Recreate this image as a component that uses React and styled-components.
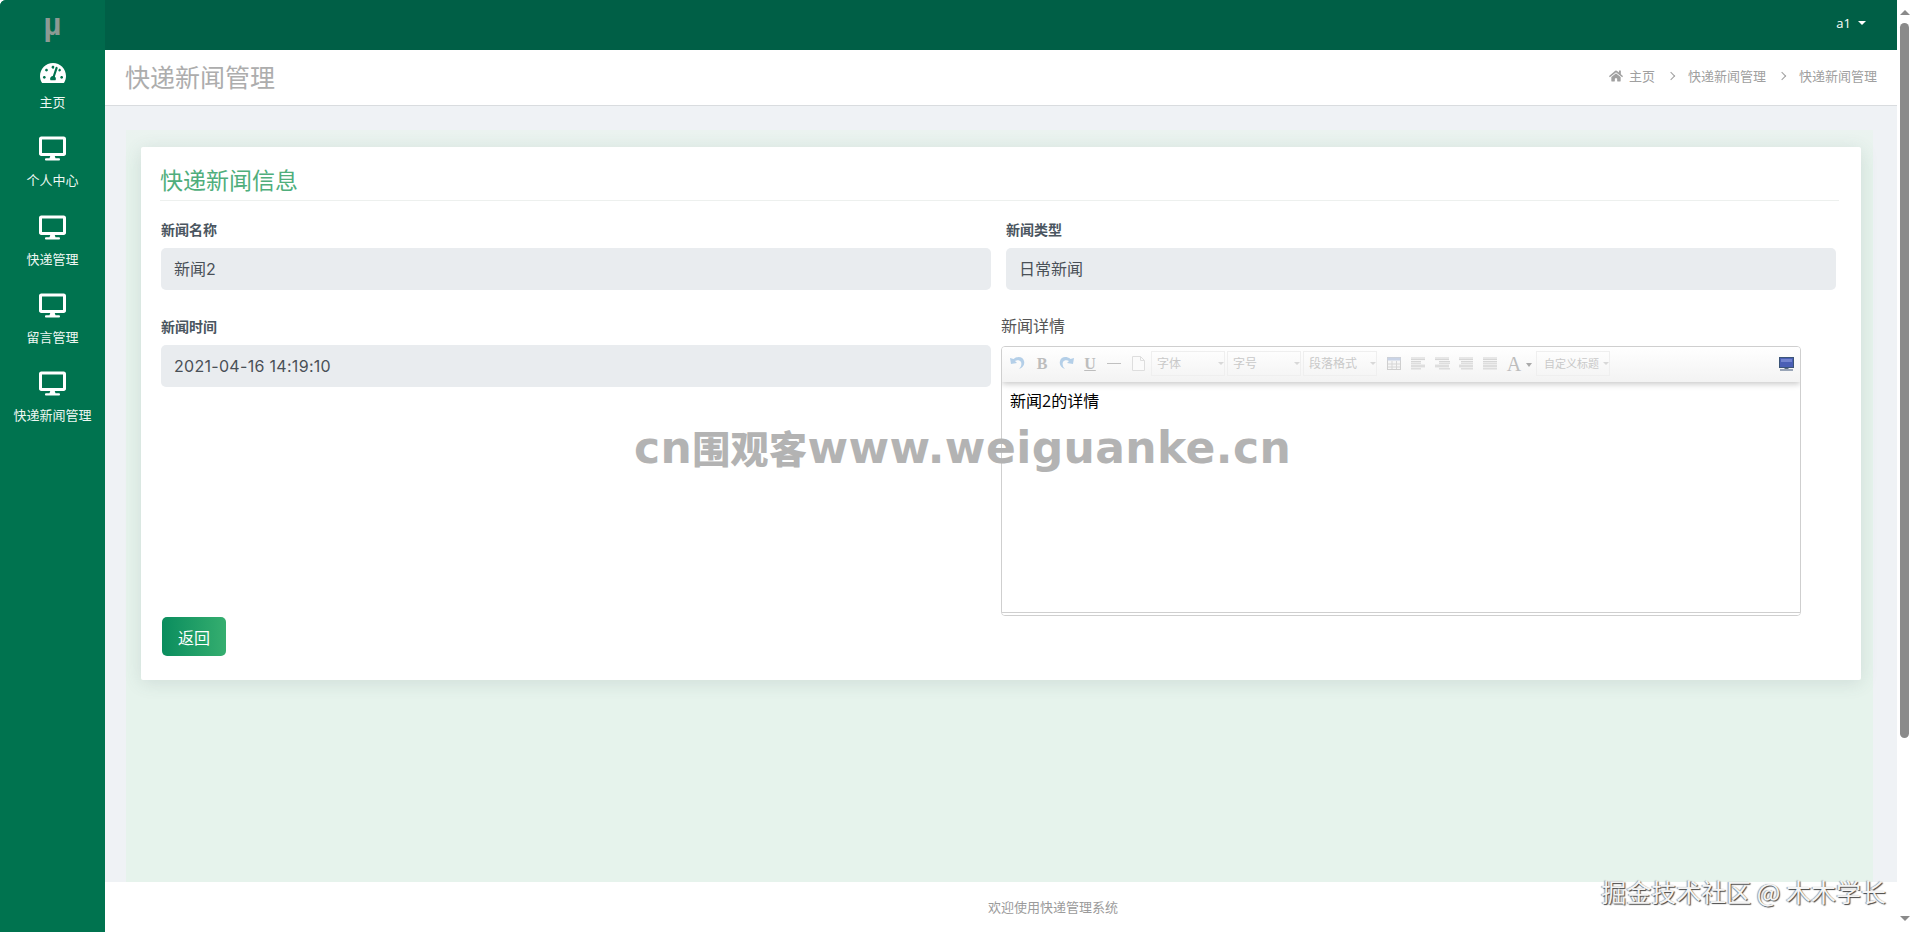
import React from "react"
import styled, { createGlobalStyle } from "styled-components"
import { FaDesktop, FaHome, FaTachometerAlt } from "react-icons/fa"

const GlobalStyle = createGlobalStyle`
	html, body {
		margin: 0;
		height: 100%;
		overflow: hidden;
		background: #fff;
	}
	* {
		box-sizing: border-box;
	}
	body {
		font-family: "Open Sans", "Noto Sans CJK SC", sans-serif;
	}
`

const navItems = [
	{ label: "主页", Icon: FaTachometerAlt, size: 26, raised: false },
	{ label: "个人中心", Icon: FaDesktop, size: 27, raised: true },
	{ label: "快递管理", Icon: FaDesktop, size: 27, raised: true },
	{ label: "留言管理", Icon: FaDesktop, size: 27, raised: true },
	{ label: "快递新闻管理", Icon: FaDesktop, size: 27, raised: true },
]

const App = () => {
	return (
		<Shell>
			<GlobalStyle />
			<Sidebar>
				<Logo>µ</Logo>
				{navItems.map(({ label, Icon, size, raised }) => (
					<NavItem key={label}>
						<NavIcon $raised={raised}><Icon size={size} /></NavIcon>
						<span>{label}</span>
					</NavItem>
				))}
			</Sidebar>
			<Main>
				<TopBar>
					<UserMenu>a1<Caret /></UserMenu>
				</TopBar>
				<PageHeader>
					<PageTitle>快递新闻管理</PageTitle>
					<Breadcrumb>
						<FaHome size={14} />
						<HomeText>主页</HomeText>
						<Chevron />
						<span>快递新闻管理</span>
						<Chevron />
						<span>快递新闻管理</span>
					</Breadcrumb>
				</PageHeader>
				<Content>
					<Panel>
						<Card>
							<CardTitle>快递新闻信息</CardTitle>
							<FormGrid>
								<Field>
									<BoldLabel>新闻名称</BoldLabel>
									<ReadOnlyInput>新闻2</ReadOnlyInput>
								</Field>
								<Field>
									<BoldLabel>新闻类型</BoldLabel>
									<ReadOnlyInput>日常新闻</ReadOnlyInput>
								</Field>
								<LowerField>
									<BoldLabel>新闻时间</BoldLabel>
									<DateInput>2021-04-16 14:19:10</DateInput>
								</LowerField>
								<EditorField>
									<PlainLabel>新闻详情</PlainLabel>
									<Editor>
										<Toolbar>
											<ToolSlot><UndoIcon /></ToolSlot>
											<ToolSlot><Glyph>B</Glyph></ToolSlot>
											<ToolSlot><RedoIcon /></ToolSlot>
											<ToolSlot><Glyph $underline>U</Glyph></ToolSlot>
											<ToolSlot><HrIcon /></ToolSlot>
											<ToolSlot><PageIcon /></ToolSlot>
											<ToolSelect>字体</ToolSelect>
											<ToolSelect>字号</ToolSelect>
											<ToolSelect>段落格式</ToolSelect>
											<TableSlot><TableIcon /></TableSlot>
											<ToolSlot><AlignIcon rows={[[0, 14], [0, 10], [0, 14], [0, 10]]} /></ToolSlot>
											<ToolSlot><AlignIcon rows={[[0, 14], [4, 14], [0, 14], [4, 14]]} /></ToolSlot>
											<ToolSlot><AlignIcon rows={[[0, 14], [2, 12], [0, 14], [2, 12]]} /></ToolSlot>
											<ToolSlot><AlignIcon rows={[[0, 14], [0, 14], [0, 14], [0, 14]]} /></ToolSlot>
											<ToolSlot><Glyph $large>A</Glyph></ToolSlot>
											<ToolCaret />
											<ToolSelect $tight>自定义标题</ToolSelect>
											<FullscreenSlot><FullscreenIcon /></FullscreenSlot>
										</Toolbar>
										<EditorBody>新闻2的详情</EditorBody>
										<EditorFoot />
									</Editor>
								</EditorField>
							</FormGrid>
							<BackButton>返回</BackButton>
						</Card>
					</Panel>
				</Content>
				<Footer>欢迎使用快递管理系统</Footer>
			</Main>
			<Scrollbar>
				<ArrowUp />
				<Thumb />
				<ArrowDown />
			</Scrollbar>
			<SiteMark>cn<SiteMarkCjk>围观客</SiteMarkCjk>www.weiguanke.cn</SiteMark>
			<AuthorMark>掘金技术社区 @ 木木学长</AuthorMark>
		</Shell>
	)
}

// toolbar drawings, all pale because the editor is disabled
const UndoIcon = () => (
	<svg width="16" height="15" viewBox="0 0 16 15">
		<path d="M0 2l1 6 6-1-2-2c2-1.500 5-1 6 1 1 2.500 0 5-2 7 4-1 6-4.500 5-8C13 1 8-.5 3.500 3z" fill="#b4cfe8" />
	</svg>
)

const RedoIcon = () => (
	<svg width="16" height="15" viewBox="0 0 16 15">
		<path d="M16 2l-1 6-6-1 2-2C9 3.500 6 4 5 6c-1 2.500 0 5 2 7C3 12 1 8.500 2 5c1-4 6-5.500 10.500-2z" fill="#b4cfe8" />
	</svg>
)

const HrIcon = () => (
	<svg width="16" height="16" viewBox="0 0 16 16">
		<rect x="1" y="7" width="14" height="1" fill="#c0c0c0" />
	</svg>
)

const PageIcon = () => (
	<svg width="13" height="15" viewBox="0 0 13 15">
		<path d="M.5 .5h8l4 4v10H.5z M8.500 .5v4h4" fill="#fbfbfb" stroke="#dedede" />
	</svg>
)

const TableIcon = () => (
	<svg width="14" height="13" viewBox="0 0 14 13">
		<rect x=".5" y=".5" width="13" height="12" fill="#f6f6f6" stroke="#cfcfcf" />
		<rect x=".5" y=".5" width="13" height="3" fill="#c9d3e6" />
		<path d="M5 4v8M9.500 4v8M1 7h12M1 10h12" stroke="#d6d6d6" />
	</svg>
)

const AlignIcon = ({ rows }) => (
	<svg width="15" height="13" viewBox="0 0 15 13">
		{rows.map(([x, w], i) => (
			<path key={i} d={`M${x} ${1 + i * 3.6}h${w}M${x} ${2.6 + i * 3.6}h${w}`} stroke="#d2d2d2" />
		))}
	</svg>
)

const FullscreenIcon = () => (
	<svg width="15" height="14" viewBox="0 0 15 14">
		<rect x=".5" y=".5" width="14" height="10" fill="#4a5fb5" stroke="#3c5578" />
		<rect x="2" y="2" width="11" height="3" fill="#7384cf" />
		<rect x="5.500" y="11" width="4" height="1" fill="#5b6b80" />
		<rect x="1" y="12.500" width="13" height="1" fill="#3c5578" />
	</svg>
)

const Shell = styled.div`
	position: relative;
	display: flex;
	width: 1912px;
	height: 932px;
	overflow: hidden;
	border-top-left-radius: 6px;
`

const Sidebar = styled.nav`
	flex: 0 0 105px;
	display: flex;
	flex-direction: column;
	background: #00734f;
`

const Logo = styled.div`
	height: 50px;
	background: #006a4c;
	color: #8d9a94;
	font: bold 31px/50px "Liberation Sans", sans-serif;
	text-align: center;
`

const NavItem = styled.a`
	height: 78.3px;
	display: flex;
	flex-direction: column;
	align-items: center;
	padding-top: 7px;
	color: #eef8f3;
	font-size: 13px;
	line-height: 18px;
`

const NavIcon = styled.span`
	height: 32px;
	margin-bottom: 4px;
	display: flex;
	align-items: ${props => (props.$raised ? "flex-start" : "center")};
	color: #fff;
`

const Main = styled.div`
	flex: 1;
	min-width: 0;
	display: flex;
	flex-direction: column;
`

const TopBar = styled.header`
	flex: 0 0 50px;
	display: flex;
	align-items: center;
	justify-content: flex-end;
	padding: 0 31px 4px 0;
	background: #005f46;
`

const UserMenu = styled.span`
	display: flex;
	align-items: center;
	gap: 7px;
	color: #fff;
	font-size: 13px;
`

const Caret = styled.i`
	width: 0;
	height: 0;
	border-left: 4px solid transparent;
	border-right: 4px solid transparent;
	border-top: 4px solid #fff;
`

const PageHeader = styled.div`
	flex: 0 0 56px;
	display: flex;
	align-items: center;
	justify-content: space-between;
	padding: 0 20px 4px 20px;
	background: #fff;
	border-bottom: 1px solid #d9dcdf;
`

const PageTitle = styled.h1`
	margin: 0;
	color: #adadad;
	font-size: 25px;
	font-weight: 400;
`

const Breadcrumb = styled.div`
	display: flex;
	align-items: center;
	color: #a0a0a0;
	font-size: 13px;
`

const HomeText = styled.span`
	margin-left: 6px;
`

const Chevron = styled.i`
	width: 6px;
	height: 6px;
	margin: 0 14px 0 13px;
	border-top: 1px solid #a0a0a0;
	border-right: 1px solid #a0a0a0;
	transform: rotate(45deg);
`

const Content = styled.main`
	flex: 1;
	display: flex;
	padding: 24px 24px 0 21px;
	background: #eff2f5;
`

const Panel = styled.div`
	flex: 1;
	padding: 17px 12px 0 15px;
	background: linear-gradient(#ebf3f0, #e6f3ec 40px);
`

const Card = styled.section`
	padding: 18px 20px 24px;
	background: #fff;
	border-radius: 2px;
	box-shadow: 0 3px 18px rgba(70, 90, 100, .14);
`

const CardTitle = styled.h2`
	height: 36px;
	margin: 0 2px 19px -1px;
	border-bottom: 1px solid #edf0ee;
	color: #4fae7c;
	font-size: 23px;
	font-weight: 400;
	line-height: 30px;
`

const FormGrid = styled.div`
	display: grid;
	grid-template-columns: 830px 830px;
	column-gap: 15px;
`

const Field = styled.div`
	display: flex;
	flex-direction: column;
`

const LowerField = styled(Field)`
	margin-top: 27px;
`

const EditorField = styled(Field)`
	margin: 26px 0 0 -5px;
`

const BoldLabel = styled.label`
	height: 20px;
	margin-bottom: 8px;
	color: #4a5560;
	font-size: 14px;
	font-weight: 700;
	line-height: 20px;
`

const PlainLabel = styled.label`
	height: 20px;
	margin-bottom: 10px;
	color: #555;
	font-size: 16px;
	line-height: 20px;
`

const ReadOnlyInput = styled.div`
	height: 42px;
	padding: 0 13px;
	background: #e9ecef;
	border-radius: 5px;
	color: #495057;
	font-family: Inter, "Noto Sans CJK SC", sans-serif;
	font-size: 16px;
	line-height: 42px;
`

const DateInput = styled(ReadOnlyInput)`
	letter-spacing: .3px;
`

const Editor = styled.div`
	width: 800px;
	height: 270px;
	display: flex;
	flex-direction: column;
	border: 1px solid #cfcfcf;
	border-radius: 4px;
	overflow: hidden;
`

const Toolbar = styled.div`
	position: relative;
	flex: 0 0 35px;
	display: flex;
	align-items: center;
	padding: 0 2px 2px 4px;
	background: linear-gradient(#fff, #f3f3f3);
	box-shadow: 0 2px 6px rgba(0, 0, 0, .22);
`

const ToolSlot = styled.span`
	flex: 0 0 24px;
	display: flex;
	align-items: center;
	justify-content: center;
`

const TableSlot = styled(ToolSlot)`
	margin-left: 4px;
`

const FullscreenSlot = styled(ToolSlot)`
	margin-left: auto;
`

const Glyph = styled.span`
	color: #bdbdbd;
	font-family: "Liberation Serif", serif;
	font-size: ${props => (props.$large ? 20 : 16)}px;
	font-weight: ${props => (props.$large ? 400 : 700)};
	line-height: 1;
	text-decoration: ${props => (props.$underline ? "underline" : "none")};
`

const ToolCaret = styled.i`
	width: 0;
	height: 0;
	margin: 2px 3px 0 0;
	border-left: 3px solid transparent;
	border-right: 3px solid transparent;
	border-top: 4px solid #aaa;
`

const ToolSelect = styled.span`
	position: relative;
	flex: 0 0 74px;
	height: 25px;
	margin: 0 1px;
	padding-left: ${props => (props.$tight ? 7 : 5)}px;
	border: 1px solid #efefef;
	color: #c9c9c9;
	font-size: ${props => (props.$tight ? 11 : 12)}px;
	line-height: 23px;
	overflow: hidden;
	&::after {
		content: "";
		position: absolute;
		right: 0;
		top: 10px;
		border-left: 3px solid transparent;
		border-right: 3px solid transparent;
		border-top: 3px solid #d8d8d8;
	}
`

const EditorBody = styled.div`
	flex: 1;
	padding: 4px 8px;
	background: #fff;
	color: #000;
	font-size: 16px;
	line-height: 30px;
`

const EditorFoot = styled.div`
	flex: 0 0 3px;
	border-top: 1px solid #cfcfcf;
	background: #fff;
`

const BackButton = styled.button`
	display: block;
	width: 64px;
	height: 39px;
	margin: 1px 0 0 1px;
	padding: 0;
	border: 0;
	border-radius: 5px;
	background: linear-gradient(90deg, #0a8d5e, #35ae6f);
	color: #fff;
	font-family: inherit;
	font-size: 16px;
`

const Footer = styled.footer`
	flex: 0 0 50px;
	padding: 16px 0 0 104px;
	background: #fff;
	color: #9b9b9b;
	font-size: 13px;
	line-height: 18px;
	text-align: center;
`

const Scrollbar = styled.div`
	flex: 0 0 15px;
	display: flex;
	flex-direction: column;
	align-items: center;
	padding: 10px 0 11px;
	background: #fff;
`

const Thumb = styled.div`
	width: 9px;
	height: 715px;
	margin-top: 8px;
	background: #8a8a8a;
	border-radius: 5px;
`

const ArrowUp = styled.i`
	width: 0;
	height: 0;
	border-left: 5px solid transparent;
	border-right: 5px solid transparent;
	border-bottom: 5px solid #8a8a8a;
`

const ArrowDown = styled(ArrowUp)`
	margin-top: auto;
	border-bottom: 0;
	border-top: 5px solid #8a8a8a;
`

const SiteMark = styled.div`
	position: absolute;
	left: 634px;
	top: 420px;
	color: #b3b3b3;
	font: 700 44px/54px "DejaVu Sans", sans-serif;
	letter-spacing: .4px;
	white-space: nowrap;
`

const SiteMarkCjk = styled.span`
	font-family: "Noto Sans CJK SC", sans-serif;
	font-size: 38px;
	font-weight: 900;
`

const AuthorMark = styled.div`
	position: absolute;
	right: 26px;
	top: 875px;
	color: #f4f4f4;
	font: 400 25px/32px "Noto Sans CJK SC", sans-serif;
	text-shadow: 1px 1px 1px #444, -1px 0 1px #999;
	white-space: nowrap;
`

export default App
